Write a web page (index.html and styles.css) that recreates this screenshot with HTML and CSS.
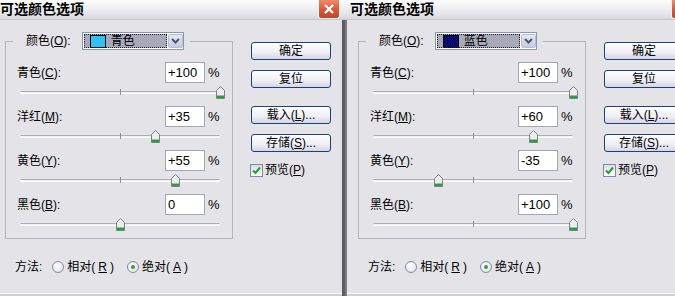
FILE: index.html
```html
<!DOCTYPE html>
<html lang="zh-CN">
<head>
    <meta charset="UTF-8">
    <meta name="viewport" content="width=device-width, initial-scale=1.0">
    <title>可选颜色选项</title>
    <link rel="stylesheet" href="styles.css">
</head>
<body>
    <div class="screen">
        <!-- Dialog 1: cyan -->
        <div class="dialog dialog-first">
            <div class="titlebar">
                <span class="title">可选颜色选项</span>
                <span class="close-btn">
                    <svg width="10" height="10" viewBox="0 0 10 10"><path d="M1 1 L9 9 M9 1 L1 9" stroke="#fff" stroke-width="2.2" fill="none"/></svg>
                </span>
            </div>
            <div class="dialog-body">
                <div class="main">
                    <fieldset class="group">
                        <legend class="group-head">
                            <span>颜色(<u>O</u>):</span>
                            <span class="select">
                                <span class="select-value"><span class="swatch swatch-cyan"></span>青色</span>
                                <span class="select-arrow">
                                    <svg width="9" height="6" viewBox="0 0 9 6"><path d="M1 1 L4.5 4.5 L8 1" stroke="#44557c" stroke-width="2" fill="none"/></svg>
                                </span>
                            </span>
                        </legend>
                        <div class="slider-row">
                            <div class="row-top"><span class="row-label">青色(<u>C</u>):</span><span class="value-box">+100</span><span class="pct">%</span></div>
                            <div class="track"><span class="thumb" style="left: 100%;"><svg width="9" height="13" viewBox="0 0 9 13"><path d="M0.5 4.5 L4.5 0.5 L8.5 4.5 V12.5 H0.5 Z" fill="#ededf0" stroke="#7c8088"/><rect x="1" y="9.5" width="7" height="2.5" fill="#22a33a"/></svg></span></div>
                        </div>
                        <div class="slider-row">
                            <div class="row-top"><span class="row-label">洋红(<u>M</u>):</span><span class="value-box">+35</span><span class="pct">%</span></div>
                            <div class="track"><span class="thumb" style="left: 67.5%;"><svg width="9" height="13" viewBox="0 0 9 13"><path d="M0.5 4.5 L4.5 0.5 L8.5 4.5 V12.5 H0.5 Z" fill="#ededf0" stroke="#7c8088"/><rect x="1" y="9.5" width="7" height="2.5" fill="#22a33a"/></svg></span></div>
                        </div>
                        <div class="slider-row">
                            <div class="row-top"><span class="row-label">黄色(<u>Y</u>):</span><span class="value-box">+55</span><span class="pct">%</span></div>
                            <div class="track"><span class="thumb" style="left: 77.5%;"><svg width="9" height="13" viewBox="0 0 9 13"><path d="M0.5 4.5 L4.5 0.5 L8.5 4.5 V12.5 H0.5 Z" fill="#ededf0" stroke="#7c8088"/><rect x="1" y="9.5" width="7" height="2.5" fill="#22a33a"/></svg></span></div>
                        </div>
                        <div class="slider-row">
                            <div class="row-top"><span class="row-label">黑色(<u>B</u>):</span><span class="value-box">0</span><span class="pct">%</span></div>
                            <div class="track"><span class="thumb" style="left: 50%;"><svg width="9" height="13" viewBox="0 0 9 13"><path d="M0.5 4.5 L4.5 0.5 L8.5 4.5 V12.5 H0.5 Z" fill="#ededf0" stroke="#7c8088"/><rect x="1" y="9.5" width="7" height="2.5" fill="#22a33a"/></svg></span></div>
                        </div>
                    </fieldset>
                    <div class="method">
                        <span class="method-label">方法:</span>
                        <span class="radio-option"><span class="radio"></span>相对(<u>R</u>)</span>
                        <span class="radio-option"><span class="radio checked"></span>绝对(<u>A</u>)</span>
                    </div>
                </div>
                <div class="side">
                    <div class="btn">确定</div>
                    <div class="btn">复位</div>
                    <div class="btn btn-gap">载入(<u>L</u>)...</div>
                    <div class="btn">存储(<u>S</u>)...</div>
                    <div class="check">
                        <span class="check-box"><svg width="9" height="9" viewBox="0 0 9 9"><path d="M1 4.5 L3.5 7 L8 1.5" stroke="#21a121" stroke-width="2" fill="none"/></svg></span>
                        预览(<u>P</u>)
                    </div>
                </div>
            </div>
        </div>

        <!-- Dialog 2: blue -->
        <div class="dialog">
            <div class="titlebar">
                <span class="title">可选颜色选项</span>
                <span class="close-btn">
                    <svg width="10" height="10" viewBox="0 0 10 10"><path d="M1 1 L9 9 M9 1 L1 9" stroke="#fff" stroke-width="2.2" fill="none"/></svg>
                </span>
            </div>
            <div class="dialog-body">
                <div class="main">
                    <fieldset class="group">
                        <legend class="group-head">
                            <span>颜色(<u>O</u>):</span>
                            <span class="select">
                                <span class="select-value"><span class="swatch swatch-blue"></span>蓝色</span>
                                <span class="select-arrow">
                                    <svg width="9" height="6" viewBox="0 0 9 6"><path d="M1 1 L4.5 4.5 L8 1" stroke="#44557c" stroke-width="2" fill="none"/></svg>
                                </span>
                            </span>
                        </legend>
                        <div class="slider-row">
                            <div class="row-top"><span class="row-label">青色(<u>C</u>):</span><span class="value-box">+100</span><span class="pct">%</span></div>
                            <div class="track"><span class="thumb" style="left: 100%;"><svg width="9" height="13" viewBox="0 0 9 13"><path d="M0.5 4.5 L4.5 0.5 L8.5 4.5 V12.5 H0.5 Z" fill="#ededf0" stroke="#7c8088"/><rect x="1" y="9.5" width="7" height="2.5" fill="#22a33a"/></svg></span></div>
                        </div>
                        <div class="slider-row">
                            <div class="row-top"><span class="row-label">洋红(<u>M</u>):</span><span class="value-box">+60</span><span class="pct">%</span></div>
                            <div class="track"><span class="thumb" style="left: 80%;"><svg width="9" height="13" viewBox="0 0 9 13"><path d="M0.5 4.5 L4.5 0.5 L8.5 4.5 V12.5 H0.5 Z" fill="#ededf0" stroke="#7c8088"/><rect x="1" y="9.5" width="7" height="2.5" fill="#22a33a"/></svg></span></div>
                        </div>
                        <div class="slider-row">
                            <div class="row-top"><span class="row-label">黄色(<u>Y</u>):</span><span class="value-box">-35</span><span class="pct">%</span></div>
                            <div class="track"><span class="thumb" style="left: 32.5%;"><svg width="9" height="13" viewBox="0 0 9 13"><path d="M0.5 4.5 L4.5 0.5 L8.5 4.5 V12.5 H0.5 Z" fill="#ededf0" stroke="#7c8088"/><rect x="1" y="9.5" width="7" height="2.5" fill="#22a33a"/></svg></span></div>
                        </div>
                        <div class="slider-row">
                            <div class="row-top"><span class="row-label">黑色(<u>B</u>):</span><span class="value-box">+100</span><span class="pct">%</span></div>
                            <div class="track"><span class="thumb" style="left: 100%;"><svg width="9" height="13" viewBox="0 0 9 13"><path d="M0.5 4.5 L4.5 0.5 L8.5 4.5 V12.5 H0.5 Z" fill="#ededf0" stroke="#7c8088"/><rect x="1" y="9.5" width="7" height="2.5" fill="#22a33a"/></svg></span></div>
                        </div>
                    </fieldset>
                    <div class="method">
                        <span class="method-label">方法:</span>
                        <span class="radio-option"><span class="radio"></span>相对(<u>R</u>)</span>
                        <span class="radio-option"><span class="radio checked"></span>绝对(<u>A</u>)</span>
                    </div>
                </div>
                <div class="side">
                    <div class="btn">确定</div>
                    <div class="btn">复位</div>
                    <div class="btn btn-gap">载入(<u>L</u>)...</div>
                    <div class="btn">存储(<u>S</u>)...</div>
                    <div class="check">
                        <span class="check-box"><svg width="9" height="9" viewBox="0 0 9 9"><path d="M1 4.5 L3.5 7 L8 1.5" stroke="#21a121" stroke-width="2" fill="none"/></svg></span>
                        预览(<u>P</u>)
                    </div>
                </div>
            </div>
        </div>
    </div>
</body>
</html>
```

FILE: styles.css
```css
body {
    margin: 0;
    overflow: hidden;
    background-color: #e4e4e8;
    font-family: "Liberation Sans", "Noto Sans CJK SC", sans-serif;
    font-size: 12px;
    line-height: 14px;
    color: #000;
    text-autospace: no-autospace;
}

u {
    text-underline-offset: 1px;
}

.screen {
    display: flex;
    width: 675px;
    height: 296px;
    overflow: hidden;
}

.dialog {
    flex: none;
    width: 353px;
    height: 296px;
    display: flex;
    flex-direction: column;
}

.dialog-first {
    margin-left: -8px;
}

/* title bar */
.titlebar {
    flex: none;
    height: 19px;
    display: flex;
    align-items: flex-start;
    justify-content: space-between;
    background: linear-gradient(#fdfdfe, #ececf0 55%, #d8d8de);
    border-bottom: 1px solid #c6c6ce;
}

.title {
    padding-left: 5px;
    font-size: 14px;
    font-weight: bold;
    line-height: 18px;
}

.dialog-first .title {
    padding-left: 8px;
}

.close-btn {
    width: 22px;
    height: 19px;
    box-sizing: border-box;
    margin-right: 5px;
    display: flex;
    align-items: center;
    justify-content: center;
    border: 1px solid #f2f2f2;
    border-top: none;
    border-radius: 0 0 3px 3px;
    background: linear-gradient(#ea8a70, #d65c3e 50%, #c0452a);
}

/* body */
.dialog-body {
    flex: 1;
    display: flex;
    padding: 12px 0 0 11px;
    border-left: 2px solid #7c7c86;
    border-right: 3px solid #5c5c66;
    box-shadow: inset 0 -2px #cfcfd5, inset 0 -3px #fff;
}

.main {
    flex: none;
    width: 228px;
    display: flex;
    flex-direction: column;
}

.group {
    margin: 0;
    padding: 12px 0 0;
    min-width: 0;
    border: 1px solid #b4b4bc;
}

.group-head {
    display: flex;
    align-items: center;
    height: 18px;
    margin-left: 7px;
    padding: 0 6px 0 13px;
}

.select {
    display: flex;
    width: 102px;
    height: 18px;
    box-sizing: border-box;
    margin-left: 11px;
    padding: 1px 0 1px 1px;
    border: 1px solid #8a96b2;
    background-color: #fff;
}

.select-value {
    flex: 1;
    display: flex;
    align-items: center;
    gap: 5px;
    padding-left: 6px;
    margin-right: 1px;
    background-color: #a9aab9;
    outline: 1px dotted #222;
    outline-offset: -1px;
}

.swatch {
    width: 16px;
    height: 13px;
    box-sizing: border-box;
    border: 1px solid #000;
}

.swatch-cyan {
    background-color: #2fc2f2;
}

.swatch-blue {
    background-color: #0c0c6e;
}

.select-arrow {
    flex: none;
    width: 15px;
    box-sizing: border-box;
    display: flex;
    align-items: center;
    justify-content: center;
    border: 1px solid #b8bdd0;
    border-radius: 2px;
    background: linear-gradient(#e8eaf2, #c6cadb);
}

/* slider rows */
.slider-row {
    height: 44px;
    padding-left: 11px;
}

.row-top {
    display: flex;
    align-items: center;
    height: 21px;
}

.row-label {
    flex: none;
    width: 148px;
}

.value-box {
    width: 40px;
    height: 21px;
    box-sizing: border-box;
    padding-left: 2px;
    border: 1px solid #a0a8b8;
    background-color: #fff;
    font-size: 13px;
    line-height: 19px;
}

.pct {
    margin-left: 3px;
    font-size: 13px;
}

.track {
    position: relative;
    width: 200px;
    height: 3px;
    box-sizing: border-box;
    margin: 8px 0 0 3px;
    border-top: 1px solid #acacb2;
    border-bottom: 1px solid #fff;
    border-radius: 2px;
    background-color: #f2f2f4;
}

.track::after {
    content: "";
    position: absolute;
    left: 50%;
    top: -3px;
    width: 1px;
    height: 6px;
    background-color: #8e8e94;
}

.thumb {
    position: absolute;
    top: -6px;
    margin-left: -4px;
    width: 9px;
    height: 13px;
    z-index: 1;
}

.thumb svg {
    display: block;
}

/* method row */
.method {
    display: flex;
    align-items: center;
    height: 16px;
    margin-top: 20px;
    padding-left: 10px;
}

.method-label {
    margin-right: 10px;
}

.radio-option {
    display: flex;
    align-items: center;
    gap: 3px;
    margin-right: 13px;
}

.radio {
    width: 12px;
    height: 12px;
    box-sizing: border-box;
    display: flex;
    align-items: center;
    justify-content: center;
    border: 1px solid #7d8cab;
    border-radius: 50%;
    background: radial-gradient(circle at 40% 35%, #fff, #dcdce6);
}

.radio.checked::after {
    content: "";
    width: 4px;
    height: 4px;
    border-radius: 50%;
    background-color: #2aa82a;
}

/* right column */
.side {
    flex: none;
    display: flex;
    flex-direction: column;
    margin-left: 18px;
    padding-top: 10px;
}

.btn {
    width: 80px;
    height: 18px;
    box-sizing: border-box;
    display: flex;
    align-items: center;
    justify-content: center;
    border: 1px solid #1f3f76;
    border-radius: 3px;
    background: linear-gradient(#fff, #f0f0f5 55%, #d4d7e6);
}

.btn + .btn {
    margin-top: 10px;
}

.btn.btn-gap {
    margin-top: 18px;
}

.check {
    display: flex;
    align-items: center;
    margin: 11px 0 0 -1px;
}

.check-box {
    width: 13px;
    height: 13px;
    box-sizing: border-box;
    display: flex;
    align-items: center;
    justify-content: center;
    margin-right: 2px;
    border: 1px solid #7d8cab;
    background: linear-gradient(#dcdce6, #fff);
}
```
